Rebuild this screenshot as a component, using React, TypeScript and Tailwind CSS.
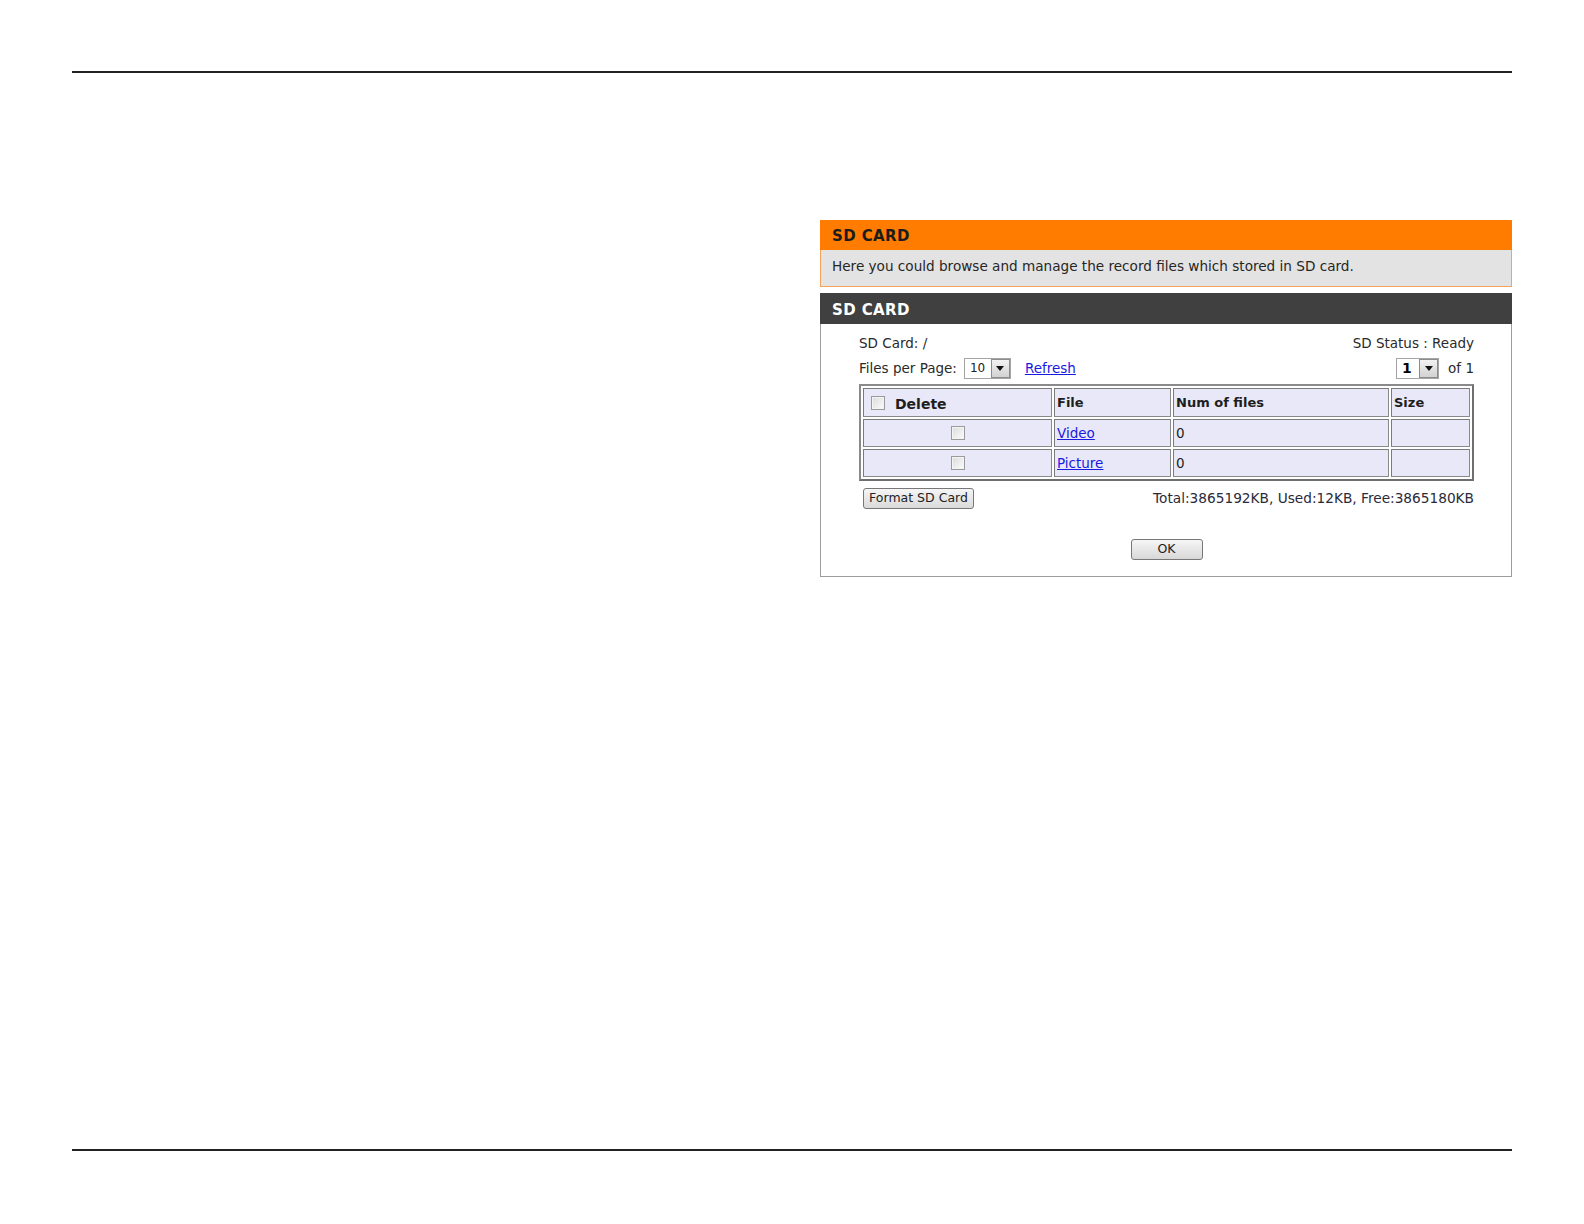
import React from 'react';

const Check = () => (
  <span className="inline-block w-[14px] h-[14px] border border-[#9a9a9a] bg-gradient-to-br from-[#dcdcdc] to-[#fbfbfb] shadow-[inset_0_0_0_1px_#f4f4f4]" />
);

const Dropdown = ({ value, bold = false, w }: { value: string; bold?: boolean; w: string }) => (
  <span className={`inline-flex items-center h-[21px] ${w} border border-[#a5a5a5] bg-white`}>
    <span className={`flex-1 pl-[5px] leading-none ${bold ? 'font-bold text-[14px] text-black' : 'text-[12px] text-[#222]'}`}>{value}</span>
    <span className="w-[19px] h-[19px] border border-[#8c8c8c] bg-gradient-to-b from-[#f2f2f2] to-[#d2d2d2] flex items-center justify-center">
      <svg width="8" height="5" viewBox="0 0 8 5"><path d="M0 0h8L4 5z" fill="#111" /></svg>
    </span>
  </span>
);

const Cell = ({ children, className = '' }: { children?: React.ReactNode; className?: string }) => (
  <td className={`border border-[#8a8a8a] border-t-[#7a7a7a] border-l-[#7a7a7a] bg-[#e8e8f8] px-[2px] h-[28px] ${className}`}>{children}</td>
);

export default function App() {
  return (
    <div className="w-[1584px] h-[1224px] bg-white relative" style={{ fontFamily: '"DejaVu Sans", Verdana, sans-serif' }}>
      <div className="px-[72px] pt-[71px]">
        <div className="h-[2px] bg-[#222]" />
        <div className="ml-auto w-[692px] mt-[147px]">
          <div className="h-[30px] bg-[#ff7c00] px-[12px] pt-[3px] flex items-center text-[15px] font-bold text-[#1c1c1c] tracking-[0.4px]">SD CARD</div>
          <div className="h-[37px] bg-[#e3e3e3] border border-t-0 border-[#f3a35a] px-[11px] pb-[3px] flex items-center text-[13.6px] text-[#262626]">
            Here you could browse and manage the record files which stored in SD card.
          </div>
          <div className="h-[31px] mt-[6px] bg-[#404040] px-[12px] pt-[4px] flex items-center text-[15px] font-bold text-white tracking-[0.4px]">SD CARD</div>
          <div className="h-[253px] border border-t-0 border-[#9d9d9d] pl-[38px] pr-[37px] pt-[9px] text-[13.5px] text-[#2a2a2a]">
            <div className="flex justify-between items-center h-[20px]">
              <span>SD Card: /</span>
              <span>SD Status : Ready</span>
            </div>
            <div className="flex justify-between items-center h-[26px] mt-[2px]">
              <div className="flex items-center">
                <span>Files per Page:</span>
                <span className="ml-[7px]"><Dropdown value="10" w="w-[47px]" /></span>
                <span className="ml-[14px] text-[#1a1ae0] underline">Refresh</span>
              </div>
              <div className="flex items-center">
                <Dropdown value="1" bold w="w-[43px]" />
                <span className="ml-[9px]">of 1</span>
              </div>
            </div>
            <table className="mt-[3px] w-[615px] border-separate border-spacing-[2px] border-2 border-[#8a8a8a] border-r-[#6f6f6f] border-b-[#6f6f6f] text-[13.5px] text-[#1e1e1e]">
              <tbody>
                <tr>
                  <Cell className="w-[189px] h-[29px]">
                    <div className="flex items-center pl-[5px]">
                      <Check />
                      <span className="ml-[10px] font-bold text-[14px] mt-[3px]">Delete</span>
                    </div>
                  </Cell>
                  <Cell className="w-[117px] font-bold text-[13px]">File</Cell>
                  <Cell className="w-[216px] font-bold text-[13px]">Num of files</Cell>
                  <Cell className="font-bold text-[13px]">Size</Cell>
                </tr>
                <tr>
                  <Cell><div className="flex justify-center"><Check /></div></Cell>
                  <Cell><span className="text-[#1a1ae0] underline">Video</span></Cell>
                  <Cell>0</Cell>
                  <Cell />
                </tr>
                <tr>
                  <Cell><div className="flex justify-center"><Check /></div></Cell>
                  <Cell><span className="text-[#1a1ae0] underline">Picture</span></Cell>
                  <Cell>0</Cell>
                  <Cell />
                </tr>
              </tbody>
            </table>
            <div className="flex justify-between items-center mt-[7px] pl-[4px]">
              <button className="h-[21px] w-[111px] rounded-[3px] border border-[#777] bg-gradient-to-b from-[#f6f6f6] to-[#dadada] text-[12.5px] text-[#222] leading-none">Format SD Card</button>
              <span className="text-[13.7px] text-[#2a2a3a]">Total:3865192KB, Used:12KB, Free:3865180KB</span>
            </div>
            <div className="flex justify-center mt-[30px]">
              <button className="h-[21px] w-[72px] rounded-[3px] border border-[#777] bg-gradient-to-b from-[#f6f6f6] to-[#d8d8d8] text-[12.5px] text-[#222] leading-none">OK</button>
            </div>
          </div>
        </div>
      </div>
      <div className="absolute left-[72px] right-[72px] top-[1149px] h-[2px] bg-[#222]" />
    </div>
  );
}
